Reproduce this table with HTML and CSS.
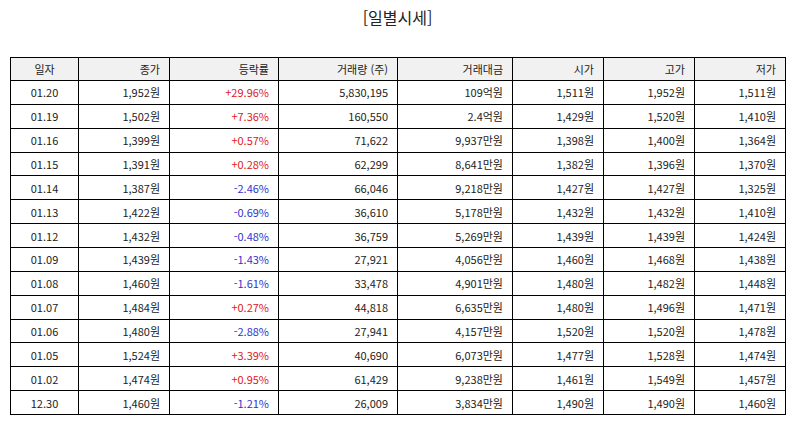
FILE: index.html
```html
<!DOCTYPE html>
<html lang="ko">
<head>
<meta charset="utf-8">
<link rel="stylesheet" href="styles.css">
</head>
<body>
<div class="page">
  <h1 class="title">[일별시세]</h1>
  <table class="quotes">
    <colgroup>
      <col class="c-date"><col class="c-close"><col class="c-rate"><col class="c-vol"><col class="c-amt"><col class="c-px"><col class="c-px"><col class="c-px">
    </colgroup>
    <thead>
      <tr><th class="center">일자</th><th>종가</th><th>등락률</th><th>거래량 (주)</th><th>거래대금</th><th>시가</th><th>고가</th><th>저가</th></tr>
    </thead>
    <tbody>
      <tr><td class="center">01.20</td><td>1,952원</td><td class="up">+29.96%</td><td>5,830,195</td><td>109억원</td><td>1,511원</td><td>1,952원</td><td>1,511원</td></tr>
      <tr><td class="center">01.19</td><td>1,502원</td><td class="up">+7.36%</td><td>160,550</td><td>2.4억원</td><td>1,429원</td><td>1,520원</td><td>1,410원</td></tr>
      <tr><td class="center">01.16</td><td>1,399원</td><td class="up">+0.57%</td><td>71,622</td><td>9,937만원</td><td>1,398원</td><td>1,400원</td><td>1,364원</td></tr>
      <tr><td class="center">01.15</td><td>1,391원</td><td class="up">+0.28%</td><td>62,299</td><td>8,641만원</td><td>1,382원</td><td>1,396원</td><td>1,370원</td></tr>
      <tr><td class="center">01.14</td><td>1,387원</td><td class="down">-2.46%</td><td>66,046</td><td>9,218만원</td><td>1,427원</td><td>1,427원</td><td>1,325원</td></tr>
      <tr><td class="center">01.13</td><td>1,422원</td><td class="down">-0.69%</td><td>36,610</td><td>5,178만원</td><td>1,432원</td><td>1,432원</td><td>1,410원</td></tr>
      <tr><td class="center">01.12</td><td>1,432원</td><td class="down">-0.48%</td><td>36,759</td><td>5,269만원</td><td>1,439원</td><td>1,439원</td><td>1,424원</td></tr>
      <tr><td class="center">01.09</td><td>1,439원</td><td class="down">-1.43%</td><td>27,921</td><td>4,056만원</td><td>1,460원</td><td>1,468원</td><td>1,438원</td></tr>
      <tr><td class="center">01.08</td><td>1,460원</td><td class="down">-1.61%</td><td>33,478</td><td>4,901만원</td><td>1,480원</td><td>1,482원</td><td>1,448원</td></tr>
      <tr><td class="center">01.07</td><td>1,484원</td><td class="up">+0.27%</td><td>44,818</td><td>6,635만원</td><td>1,480원</td><td>1,496원</td><td>1,471원</td></tr>
      <tr><td class="center">01.06</td><td>1,480원</td><td class="down">-2.88%</td><td>27,941</td><td>4,157만원</td><td>1,520원</td><td>1,520원</td><td>1,478원</td></tr>
      <tr><td class="center">01.05</td><td>1,524원</td><td class="up">+3.39%</td><td>40,690</td><td>6,073만원</td><td>1,477원</td><td>1,528원</td><td>1,474원</td></tr>
      <tr><td class="center">01.02</td><td>1,474원</td><td class="up">+0.95%</td><td>61,429</td><td>9,238만원</td><td>1,461원</td><td>1,549원</td><td>1,457원</td></tr>
      <tr><td class="center">12.30</td><td>1,460원</td><td class="down">-1.21%</td><td>26,009</td><td>3,834만원</td><td>1,490원</td><td>1,490원</td><td>1,460원</td></tr>
    </tbody>
  </table>
</div>
</body>
</html>
```
FILE: styles.css
```css
html, body {
  margin: 0;
  padding: 0;
  background: #fff;
}
body {
  font-family: "Noto Sans CJK KR", "Noto Sans", sans-serif;
  color: #222;
}
.page {
  padding: 0 9px 0 10px;
}
.title {
  margin: 0;
  padding-top: 5px;
  height: 57px;
  box-sizing: border-box;
  font-size: 16px;
  font-weight: normal;
  text-align: center;
  line-height: 24px;
  color: #222;
}
.quotes {
  width: 775px;
  border-collapse: collapse;
  table-layout: fixed;
  font-size: 11px;
  color: #222;
}
.c-date { width: 68px; }
.c-close { width: 91px; }
.c-rate { width: 109px; }
.c-vol { width: 119px; }
.c-amt { width: 115px; }
.c-px { width: 91px; }
.quotes th, .quotes td {
  border: 1px solid #000;
  padding: 0 9px 0 4px;
  text-align: right;
  font-weight: normal;
  white-space: nowrap;
  line-height: 14px;
}
.quotes th {
  background: #f1f1f1;
  height: 22px;
}
.quotes td {
  height: 22.86px;
}
.quotes .center {
  text-align: center;
  padding: 0;
}
.up { color: #e02020; }
.down { color: #3333cc; }
```
